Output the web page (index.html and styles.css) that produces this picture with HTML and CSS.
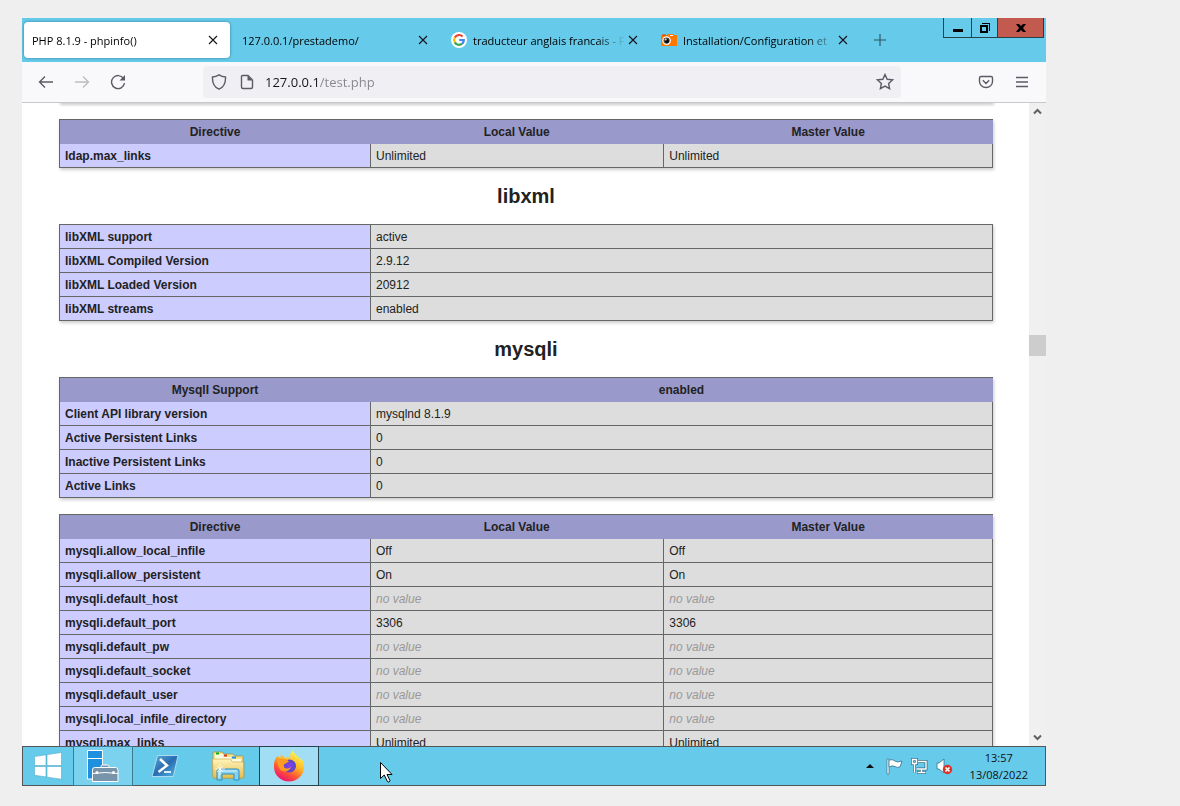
FILE: index.html
```html
<!DOCTYPE html>
<html lang="en">
<head>
<meta charset="utf-8">
<title>PHP 8.1.9 - phpinfo()</title>
<link rel="stylesheet" href="styles.css">
</head>
<body>
<div class="desktop">
  <header class="tabbar">
    <div class="tab tab-active">
      <button class="tab-label" type="button">PHP 8.1.9 - phpinfo()</button>
      <button class="tab-close" type="button" aria-label="Close tab"><svg width="10" height="10" viewBox="0 0 10 10"><path d="M1 1l8 8M9 1L1 9"/></svg></button>
    </div>
    <div class="tab">
      <button class="tab-label" type="button">127.0.0.1/prestademo/</button>
      <button class="tab-close" type="button" aria-label="Close tab"><svg width="10" height="10" viewBox="0 0 10 10"><path d="M1 1l8 8M9 1L1 9"/></svg></button>
    </div>
    <div class="tab">
      <svg class="favicon" width="16" height="16" viewBox="0 0 16 16">
        <circle cx="8" cy="8" r="8" fill="#fff"/>
        <g fill="none" stroke-width="2.2">
          <path d="M11.6 4.6A4.8 4.8 0 0 0 3.8 5.6" stroke="#ea4335"/>
          <path d="M3.8 5.6a4.8 4.8 0 0 0 0 4.8" stroke="#fbbc05"/>
          <path d="M3.8 10.4a4.8 4.8 0 0 0 7.3 1.3" stroke="#34a853"/>
          <path d="M11.1 11.7A4.8 4.8 0 0 0 12.8 8H8.2" stroke="#4285f4"/>
        </g>
      </svg>
      <button class="tab-label" type="button">traducteur anglais francais - F</button>
      <button class="tab-close" type="button" aria-label="Close tab"><svg width="10" height="10" viewBox="0 0 10 10"><path d="M1 1l8 8M9 1L1 9"/></svg></button>
    </div>
    <div class="tab">
      <svg class="favicon" width="16" height="16" viewBox="0 0 16 16">
        <path d="M1 3h5l1-1h5l1 1h3v11H1Q0 14 0 13V4Q0 3 1 3z" fill="#ff7800"/>
        <path d="M9 3.5h3" stroke="#fff"/><path d="M1 3h4" stroke="#d33c00"/>
        <circle cx="5.6" cy="8.6" r="4.3" fill="#fff"/>
        <circle cx="5.6" cy="8.6" r="3.1" fill="#444"/><circle cx="5.9" cy="9" r="2" fill="#000"/><circle cx="4.7" cy="7.4" r="1" fill="#ddd"/>
      </svg>
      <button class="tab-label" type="button">Installation/Configuration et</button>
      <button class="tab-close" type="button" aria-label="Close tab"><svg width="10" height="10" viewBox="0 0 10 10"><path d="M1 1l8 8M9 1L1 9"/></svg></button>
    </div>
    <button class="new-tab" type="button" aria-label="New tab"><svg width="12" height="12" viewBox="0 0 12 12"><path d="M6 0v12M0 6h12"/></svg></button>
    <div class="window-controls">
      <button class="control control-min" type="button" aria-label="Minimize"><svg width="10" height="10" viewBox="0 0 10 10"><path d="M0 6h10v3H0z"/></svg></button>
      <button class="control control-restore" type="button" aria-label="Restore"><svg width="10" height="10" viewBox="0 0 10 10"><path d="M0 2h8v8H0zM2 4v4h4V4z" fill-rule="evenodd"/><path d="M2 0h8v8H9V1H2z"/></svg></button>
      <button class="control control-close" type="button" aria-label="Close"><svg width="10" height="8" viewBox="0 0 10 8"><path d="M0 0h3l2 2 2-2h3L7 4l3 4H7L5 6 3 8H0l3-4z"/></svg></button>
    </div>
  </header>

  <nav class="toolbar">
    <button class="tool" type="button" aria-label="Back"><svg width="16" height="16" viewBox="0 0 16 16"><path d="M15 8H1.5M7 2.5L1.5 8 7 13.5"/></svg></button>
    <button class="tool" type="button" aria-label="Forward" disabled><svg width="16" height="16" viewBox="0 0 16 16"><path d="M1 8h13.5M9 2.5L14.5 8 9 13.5"/></svg></button>
    <button class="tool" type="button" aria-label="Reload"><svg width="16" height="16" viewBox="0 0 16 16"><path d="M13.5 4.5A6.5 6.5 0 1 0 14.5 9"/><path class="solid" d="M15 1v5.5H9.500z"/></svg></button>
    <div class="address">
      <svg width="16" height="16" viewBox="0 0 16 16"><path d="M8 .8c2 1.300 4 2 6.500 2.200.3 5.500-1.500 10-6.500 12.200C3 13 1.200 8.500 1.500 3 4 2.800 6 2.100 8 .8z"/></svg>
      <svg width="16" height="16" viewBox="0 0 16 16"><path d="M3.500 1.500H9L13.500 6v7q0 1.500-1.500 1.500H4q-1.500 0-1.500-1.500V2.500q0-1 1-1z"/><path class="solid" d="M8.500 1.500L13.500 6.500h-5z"/></svg>
      <input class="url" type="text" value="127.0.0.1/test.php" aria-label="Address">
      <button class="star" type="button" aria-label="Bookmark"><svg width="18" height="18" viewBox="0 0 18 18"><path d="M9 1.500l2.200 4.800 5.300.6-3.900 3.600 1 5.200L9 13.100l-4.600 2.600 1-5.200L1.500 6.900l5.300-.6z"/></svg></button>
    </div>
    <div class="toolbar-end">
      <button class="tool" type="button" aria-label="Save to Pocket"><svg width="16" height="16" viewBox="0 0 16 16"><path d="M3 2.500h10q1.500 0 1.500 1.500v3.500a6.500 6 0 0 1-13 0V4q0-1.500 1.500-1.500zM4.800 6.300L8 9.500l3.200-3.200"/></svg></button>
      <button class="tool" type="button" aria-label="Menu"><svg width="12" height="12" viewBox="0 0 12 12"><path d="M0 1.500h12M0 6h12M0 10.500h12"/></svg></button>
    </div>
  </nav>

  <div class="viewport">
    <main class="page">
      <div class="table-end"></div>
      <table class="info">
        <colgroup><col class="col-name"><col class="col-local"><col></colgroup>
        <tr class="head"><th>Directive</th><th>Local Value</th><th>Master Value</th></tr>
        <tr><td class="name">ldap.max_links</td><td>Unlimited</td><td>Unlimited</td></tr>
      </table>
      <h2>libxml</h2>
      <table class="info">
        <colgroup><col class="col-name"><col></colgroup>
        <tr><td class="name">libXML support</td><td>active</td></tr>
        <tr><td class="name">libXML Compiled Version</td><td>2.9.12</td></tr>
        <tr><td class="name">libXML Loaded Version</td><td>20912</td></tr>
        <tr><td class="name">libXML streams</td><td>enabled</td></tr>
      </table>
      <h2>mysqli</h2>
      <table class="info">
        <colgroup><col class="col-name"><col></colgroup>
        <tr class="head"><th>MysqlI Support</th><th>enabled</th></tr>
        <tr><td class="name">Client API library version</td><td>mysqlnd 8.1.9</td></tr>
        <tr><td class="name">Active Persistent Links</td><td>0</td></tr>
        <tr><td class="name">Inactive Persistent Links</td><td>0</td></tr>
        <tr><td class="name">Active Links</td><td>0</td></tr>
      </table>
      <table class="info">
        <colgroup><col class="col-name"><col class="col-local"><col></colgroup>
        <tr class="head"><th>Directive</th><th>Local Value</th><th>Master Value</th></tr>
        <tr><td class="name">mysqli.allow_local_infile</td><td>Off</td><td>Off</td></tr>
        <tr><td class="name">mysqli.allow_persistent</td><td>On</td><td>On</td></tr>
        <tr><td class="name">mysqli.default_host</td><td><i>no value</i></td><td><i>no value</i></td></tr>
        <tr><td class="name">mysqli.default_port</td><td>3306</td><td>3306</td></tr>
        <tr><td class="name">mysqli.default_pw</td><td><i>no value</i></td><td><i>no value</i></td></tr>
        <tr><td class="name">mysqli.default_socket</td><td><i>no value</i></td><td><i>no value</i></td></tr>
        <tr><td class="name">mysqli.default_user</td><td><i>no value</i></td><td><i>no value</i></td></tr>
        <tr><td class="name">mysqli.local_infile_directory</td><td><i>no value</i></td><td><i>no value</i></td></tr>
        <tr><td class="name">mysqli.max_links</td><td>Unlimited</td><td>Unlimited</td></tr>
      </table>
    </main>
    <div class="scrollbar">
      <button type="button" aria-label="Scroll up"><svg width="9" height="7" viewBox="0 0 9 7"><path d="M1 5.500l3.500-3.500L8 5.500"/></svg></button>
      <div class="track-before"></div>
      <div class="thumb"></div>
      <div class="track-after"></div>
      <button type="button" aria-label="Scroll down"><svg width="9" height="7" viewBox="0 0 9 7"><path d="M1 1.500L4.500 5 8 1.500"/></svg></button>
    </div>
  </div>

  <footer class="taskbar">
    <button class="task task-start" type="button" aria-label="Start"><svg width="28" height="28" viewBox="0 0 28 28"><g fill="#fff" stroke="#4fa9c8" stroke-width=".6"><path d="M.5 4.500L12 2.800v10.700H.5zM13 2.600L27.500.5v13H13zM.5 14.500H12v10.400L.5 23.300zM13 14.500h14.500v12.700L13 25.200z"/></g></svg></button>
    <button class="task task-tile" type="button" aria-label="Server Manager"><svg width="34" height="34" viewBox="0 0 34 34">
      <path d="M1.500 1.500h15V30h-15z" fill="#1e90de" stroke="#fff"/><path d="M1 9.500h16" stroke="#fff"/>
      <path d="M15 19v-1.500q0-1.500 1.500-1.500h5q1.500 0 1.500 1.500V19" fill="#7794aa" stroke="#fff"/>
      <path d="M8.500 18.500h21q2.500 0 2.500 2.500v11.500H6.500V21q0-2.500 2-2.500z" fill="#7794aa" stroke="#fff"/>
      <path d="M7 24.500q12-2 25 0" fill="none" stroke="#fff"/><circle cx="11" cy="23.500" r="1.500" fill="#fff"/><circle cx="27.500" cy="23.500" r="1.500" fill="#fff"/></svg></button>
    <button class="task task-wide" type="button" aria-label="PowerShell"><svg width="28" height="24" viewBox="0 0 28 24">
      <defs><linearGradient id="ps" x1="0" y1="0" x2="1" y2="1"><stop offset="0" stop-color="#5cb0dc"/><stop offset=".5" stop-color="#2a6cb0"/><stop offset="1" stop-color="#54bce9"/></linearGradient></defs>
      <path d="M6.500 1.500h20.500l-4.500 21H1z" fill="url(#ps)" stroke="#a9dcf0" stroke-linejoin="round"/>
      <path d="M9 5l7 6.500-8.500 6.500" fill="none" stroke="#fff" stroke-width="2.500"/><path d="M13 18h7" stroke="#d5eefa" stroke-width="2"/></svg></button>
    <button class="task task-wide" type="button" aria-label="File Explorer"><svg width="34" height="30" viewBox="0 0 34 30">
      <defs><linearGradient id="fold" x1="0" y1="0" x2="0" y2="1"><stop offset="0" stop-color="#fff5bc"/><stop offset="1" stop-color="#e5bd4e"/></linearGradient></defs>
      <path d="M2 8V2q0-1 1-1h8l2 2h9l2 2h7q1 0 1 1v5h1v15q0 1-1 1H3q-1 0-1-1z" fill="#f5df84" stroke="#ac8a39" stroke-width=".7"/>
      <path d="M4 3h8v3h8v2h10v4H4z" fill="#fffbe1"/>
      <path d="M5 1.500h3v2H5z" fill="#0aad13"/><path d="M13 3.500h3v2h-3z" fill="#d23820"/><path d="M21 5.500h4v2h-4z" fill="#1596eb"/>
      <path d="M1.500 8h18l2 3h11v16H2z" fill="url(#fold)" stroke="#c89d3b" stroke-width=".6"/>
      <path d="M6 29V20q0-2 2-2h18q2 0 2 2v9h-5v-6H11v6z" fill="#84d2f0" stroke="#2f8db8"/>
      <path d="M8 27v-6q0-1 1-1h17" fill="none" stroke="#d9f7ff"/><path d="M9 13v11M4 18h10M6 15l6 6M12 15l-6 6" stroke="#fff" stroke-width=".8"/></svg></button>
    <button class="task task-tile task-current" type="button" aria-label="Firefox"><svg width="32" height="32" viewBox="0 0 32 32">
      <defs><linearGradient id="fx" x1=".8" y1=".1" x2=".3" y2="1"><stop offset="0" stop-color="#fff44f"/><stop offset=".4" stop-color="#ffb224"/><stop offset=".7" stop-color="#ff5236"/><stop offset="1" stop-color="#eb1076"/></linearGradient>
      <radialGradient id="globe"><stop offset="0" stop-color="#8a3ff0"/><stop offset="1" stop-color="#5646c8"/></radialGradient></defs>
      <path d="M20 .5c-3 2.500-3.500 5.500-2 8-2-1.500-4-1.500-6-.5l-4-4-.5 4-3-2C1.500 9 .8 13.500 1 17a15 14.500 0 0 0 30 0c.2-4-1.200-7.500-3.500-9.500l.5 3c-1.500-4-6.500-5-8-10z" fill="url(#fx)"/>
      <circle cx="16.500" cy="16" r="6.500" fill="url(#globe)"/>
      <path d="M4 8l4 1 5 0 3 2.500-5 3q-1 3 2 4 3 0 5-1.500-2 5-8 4.500Q4 19 4 8z" fill="#ff9a22"/></svg></button>
    <div class="tray">
      <button type="button" aria-label="Show hidden icons"><svg width="8" height="4" viewBox="0 0 8 4"><path d="M4 0l4 4H0z" fill="#111"/></svg></button>
      <button type="button" aria-label="Action center"><svg width="17" height="17" viewBox="0 0 17 17"><path d="M1 1h2v15H1z" fill="#fff" stroke="#36718c" stroke-width=".7"/><path d="M3 2q4-1 6 1t7 0l-2 6q-3 1-5-.5T3 9z" fill="#fff" stroke="#36718c" stroke-width=".8"/></svg></button>
      <button type="button" aria-label="Network"><svg width="17" height="17" viewBox="0 0 17 17" fill="none"><path d="M7 3.500h8v7.500H5.500M10.500 11v3M6 14.500h9" stroke="#36718c" stroke-width="3"/><path d="M6 3.500h9v7.500H5.500M10.500 11v3M6.500 14.500h8" stroke="#fff" stroke-width="1.400"/><path d="M1.500 1.500h4v4h-4zM3.500 5.500v9" stroke="#36718c" stroke-width="3"/><path d="M1.500 1.500h4v4h-4zM3.500 5.500v9" stroke="#fff" stroke-width="1.500"/></svg></button>
      <button type="button" aria-label="Volume muted"><svg width="17" height="17" viewBox="0 0 17 17"><path d="M1 5h2l5-4v14l-5-4H1z" fill="#fff" stroke="#36718c" stroke-width=".8"/><circle cx="11.500" cy="11.500" r="4.700" fill="#df3028"/><path d="M9.500 9.500l4 4M13.500 9.500l-4 4" stroke="#fff" stroke-width="1.700"/></svg></button>
      <div class="clock"><span>13:57</span><span>13/08/2022</span></div>
    </div>
  </footer>
  <svg class="pointer" width="13" height="21" viewBox="0 0 13 21"><path d="M.5.500v16l3.700-3.500 3.200 6.500q1.500 1.500 2.700-.7L7 12.500h5z" fill="#fff" stroke="#000"/></svg>
</div>
</body>
</html>
```
FILE: styles.css
```css
* { box-sizing: border-box; }

body {
  margin: 0;
  padding: 18px 134px 20px 22px;
  background: #efefef;
  font-family: "Open Sans", "Noto Sans", sans-serif;
}

button {
  display: flex;
  align-items: center;
  justify-content: center;
  margin: 0;
  padding: 0;
  border: 0;
  background: none;
  font: inherit;
  color: inherit;
}

svg { display: block; flex: none; }

.desktop {
  position: relative;
  display: flex;
  flex-direction: column;
  height: calc(100vh - 38px);
}

/* Tabs */
.tabbar {
  display: flex;
  align-items: flex-start;
  gap: 4px;
  height: 44px;
  padding: 0 2px;
  background: #66caea;
  font-size: 11px;
}

.tab {
  display: flex;
  align-items: center;
  flex: 0 1 206px;
  min-width: 0;
  height: 36px;
  margin-top: 4px;
  padding: 0 9px 0 8px;
  border-radius: 4px;
}

.tab-active {
  background: #fff;
  box-shadow: 0 0 3px rgba(0, 0, 0, 0.4);
}

.favicon { margin: 0 6px 0 7px; }
.tab:has(.favicon) { padding-left: 0; }

.tab-label {
  flex: 1;
  justify-content: flex-start;
  min-width: 0;
  height: 20px;
  overflow: hidden;
  white-space: nowrap;
  color: #000;
  mask-image: linear-gradient(to left, transparent, #000 28px);
}

.tab-close { width: 16px; height: 16px; }

.tab-close svg,
.new-tab svg { fill: none; stroke: #15141a; stroke-width: 1.1; }

.new-tab { width: 32px; height: 36px; margin-top: 4px; }
.new-tab svg { stroke: #2f505d; }

.window-controls { display: flex; margin-left: auto; }

.control {
  height: 20px;
  border: 1px solid #26424c;
  border-top: 0;
  border-right: 0;
}

.control-min { width: 28px; }
.control-restore { width: 26px; }
.control-close { width: 47px; border-right: 1px solid #4d2926; background: #c35a50; }

/* Toolbar */
.toolbar {
  display: flex;
  align-items: center;
  gap: 4px;
  height: 41px;
  padding: 0 8px;
  border-bottom: 1px solid #c8c8cc;
  background: #f9f9fb;
}

.tool { width: 32px; height: 32px; }
.tool svg,
.address svg { fill: none; stroke: #5b5b66; stroke-width: 1.4; }
.tool:disabled svg { stroke: #bcbcc2; }
.tool .solid,
.address .solid { fill: #5b5b66; stroke: none; }

.address {
  display: flex;
  align-items: center;
  gap: 12px;
  flex: 1;
  height: 32px;
  margin-left: 65px;
  padding: 0 7px 0 8px;
  border-radius: 4px;
  background: #f0f0f4;
}

/* Host in dark text, path in grey */
.url {
  flex: 1;
  min-width: 0;
  margin-left: -2px;
  padding: 0;
  border: 0;
  outline: 0;
  font: 13px "Open Sans", "Noto Sans", sans-serif;
  color: transparent;
  background: linear-gradient(90deg, #15141a 55px, #85858c 55px);
  background-clip: text;
}

.toolbar-end { display: flex; gap: 4px; margin-left: 65px; }

/* Page */
.viewport {
  display: flex;
  flex: 1;
  min-height: 0;
  background: #fff;
}

.page {
  flex: 1;
  min-width: 0;
  overflow: hidden;
  padding: 0 36px 0 37px;
  font-family: "Liberation Sans", Arial, sans-serif;
  color: #222;
}

.table-end,
.info { box-shadow: 1px 2px 3px rgba(0, 0, 0, 0.2); }

.table-end { height: 4px; margin-top: -4px; }

.info {
  width: 100%;
  margin: 16px 0;
  table-layout: fixed;
  border-top: 1px solid #666;
  border-spacing: 0;
  font-size: 12px;
  line-height: 15px;
}

.col-name { width: 33.3%; }
.col-local { width: 31.4%; }

.info td {
  padding: 5px 5px 3px;
  border: solid #666;
  border-width: 0 0 1px 1px;
  background: #ddd;
}

.info td:last-child { border-right-width: 1px; }
.info .name { background: #ccf; font-weight: bold; }

.info th {
  padding: 5px 5px 4px;
  background: #99c;
}

.info th:first-child { border-left: 1px solid #666; }
.info i { color: #999; }

h2 {
  margin: 16px 0;
  font-size: 20px;
  line-height: 24px;
  text-align: center;
}

.scrollbar {
  display: flex;
  flex-direction: column;
  width: 17px;
  background: #f0f0f0;
}

.scrollbar button { height: 17px; }
.scrollbar svg { fill: none; stroke: #606060; stroke-width: 2; }
.track-before { flex: 215; }
.thumb { height: 21px; background: #cdcdcd; }
.track-after { flex: 373; }

/* Taskbar */
.taskbar {
  display: flex;
  height: 40px;
  border: 1px solid #555;
  background: #66caea;
}

.task-start { width: 50px; }
.task-wide { width: 63px; }
.task-tile {
  width: 60px;
  margin: -1px 0;
  border: 1px solid #3d7c90;
  background: #7ad2ee;
}
.task-current { border-color: #24434e; background: #a1def3; }

.tray {
  display: flex;
  align-items: center;
  gap: 8px;
  margin-left: auto;
  padding-right: 17px;
}

.tray > button:first-child { margin-right: 4px; }

.clock {
  display: flex;
  flex-direction: column;
  align-items: center;
  margin-left: 9px;
  font-size: 11px;
  line-height: 17px;
  color: #111;
}

.pointer {
  position: absolute;
  left: 358px;
  top: 744px;
}
```
